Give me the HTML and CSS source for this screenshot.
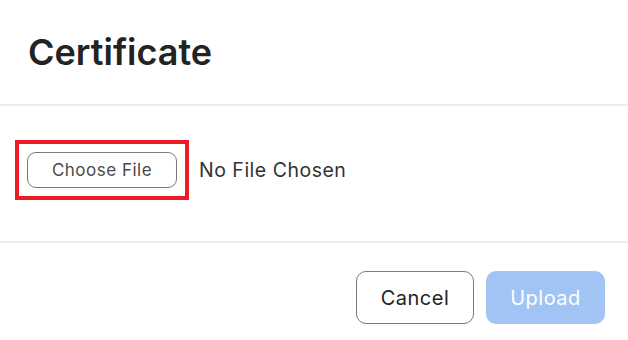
FILE: index.html
```html
<!DOCTYPE html>
<html lang="en">
<head>
  <meta charset="UTF-8" />
  <title>Certificate</title>
  <link rel="stylesheet" href="styles.css">
</head>
<body>
  <div class="modal">
    <div class="modal-header">
      <h2>Certificate</h2>
    </div>
    <div class="modal-body">
      <div class="file-row">
        <div class="file-picker">
          <button type="button" class="choose-button">Choose File</button>
        </div>
        <span class="file-name">No File Chosen</span>
      </div>
    </div>
    <div class="modal-footer">
      <button type="button" class="btn btn-cancel">Cancel</button>
      <button type="button" class="btn btn-upload" disabled>Upload</button>
    </div>
  </div>
</body>
</html>
```

FILE: styles.css
```css
* {
  box-sizing: border-box;
}

body {
  margin: 0;
  font-family: Inter, 'Noto Sans', sans-serif;
  background: #fff;
  color: #232323;
  letter-spacing: 0.5px;
}

.modal {
  width: 628px;
  height: 340px;
  background: #fff;
}

.modal-header {
  height: 106px;
  padding: 28px 28px 0;
  border-bottom: 2px solid #ececec;
}

.modal-header h2 {
  margin: 0;
  font-size: 36px;
  font-weight: 600;
  line-height: 48px;
  letter-spacing: 0;
}

.modal-body {
  height: 137px;
  padding: 34px 15px 0;
  border-bottom: 2px solid #ececec;
}

.file-row {
  display: flex;
  align-items: center;
}

.file-picker {
  border: 4px solid #ec1c24;
  padding: 8px;
}

.choose-button {
  display: block;
  width: 150px;
  height: 36px;
  border: 1px solid #7a7a7a;
  border-radius: 9px;
  background: #fff;
  font-family: inherit;
  font-size: 17px;
  letter-spacing: inherit;
  color: #4a4a4a;
}

.file-name {
  margin-left: 10px;
  font-size: 19.5px;
  color: #333;
}

.modal-footer {
  display: flex;
  justify-content: flex-end;
  gap: 12px;
  padding: 28px 23px 0;
}

.btn {
  width: 119px;
  height: 53px;
  border-radius: 10px;
  font-family: inherit;
  font-size: 20px;
  letter-spacing: inherit;
}

.btn-cancel {
  width: 118px;
  background: #fff;
  border: 1px solid #7a7a7a;
  color: #232323;
}

.btn-upload {
  background: #a1c4f5;
  border: none;
  color: #fff;
}
```
